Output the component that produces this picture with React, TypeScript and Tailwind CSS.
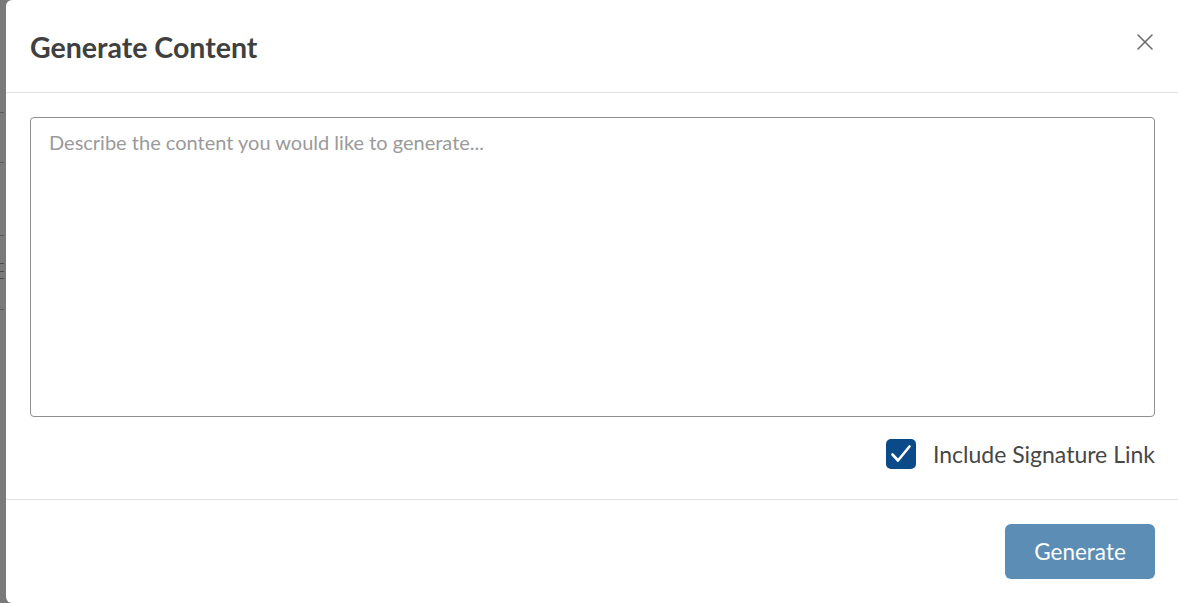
import { X } from 'lucide-react';

const font = { fontFamily: '"Lato", "Liberation Sans", sans-serif' };

function BackdropStrip() {
  // sliver of the dimmed page behind the modal
  return (
    <div className="flex w-[6px] shrink-0 flex-col bg-[#7a7a7a]">
      <div className="h-[112px]" />
      <div className="h-px w-[4px] bg-[#5a5a5a]" />
      <div className="h-[49px]" />
      <div className="h-px w-[4px] bg-[#5a5a5a]" />
      <div className="h-[72px]" />
      <div className="h-px w-[4px] bg-[#5a5a5a]" />
      <div className="h-[27px]" />
      <div className="h-px w-[4px] bg-[#4a4a4a]" />
      <div className="h-[7px]" />
      <div className="h-px w-[4px] bg-[#4a4a4a]" />
      <div className="h-[6px]" />
      <div className="h-px w-[4px] bg-[#4a4a4a]" />
      <div className="h-[30px]" />
      <div className="h-px w-[4px] bg-[#5a5a5a]" />
    </div>
  );
}

export default function App() {
  return (
    <div className="flex h-[603px] w-[1178px] overflow-hidden bg-[#7a7a7a]" style={font}>
      <BackdropStrip />
      <div className="flex flex-1 flex-col rounded-l-md bg-white">
        <div className="flex h-[93px] items-center justify-between border-b border-[#e3e3e3] pl-[24px] pr-[19px]">
          <h2 className="pt-[3px] text-[28.5px] font-bold leading-none text-[#404040]">Generate Content</h2>
          <button type="button" aria-label="Close" className="mb-[8px] text-[#6b6b6b]">
            <X className="h-[28px] w-[28px]" strokeWidth={1.3} />
          </button>
        </div>

        <div className="flex flex-col pl-[24px] pr-[23px] pt-[24px]">
          <textarea
            className="h-[300px] w-full resize-none rounded-[4px] border border-[#8e8e8e] px-[18px] py-[9px] text-[20px] text-[#444] outline-none placeholder:text-[#9a9a9a]"
            placeholder="Describe the content you would like to generate..."
            style={font}
          />
          <label className="mt-[22px] flex h-[30px] items-center justify-end gap-[17px]">
            <span className="flex h-[30px] w-[30px] items-center justify-center rounded-[5px] bg-[#0b4a88]">
              <svg viewBox="0 0 24 24" className="h-[24px] w-[24px]" fill="none" stroke="white" strokeWidth="2.6" strokeLinecap="round" strokeLinejoin="round">
                <path d="M3.5 12.5l5.5 6 11.5-14" />
              </svg>
            </span>
            <span className="text-[23px] leading-none text-[#474747]">Include Signature Link</span>
          </label>
        </div>

        <div className="mt-[30px] border-t border-[#e3e3e3]" />

        <div className="flex justify-end pl-[24px] pr-[23px] pt-[24px]">
          <button
            type="button"
            className="flex h-[55px] w-[150px] items-center justify-center rounded-[6px] bg-[#5b8db5] text-[22.5px] text-white"
          >
            Generate
          </button>
        </div>
      </div>
    </div>
  );
}
